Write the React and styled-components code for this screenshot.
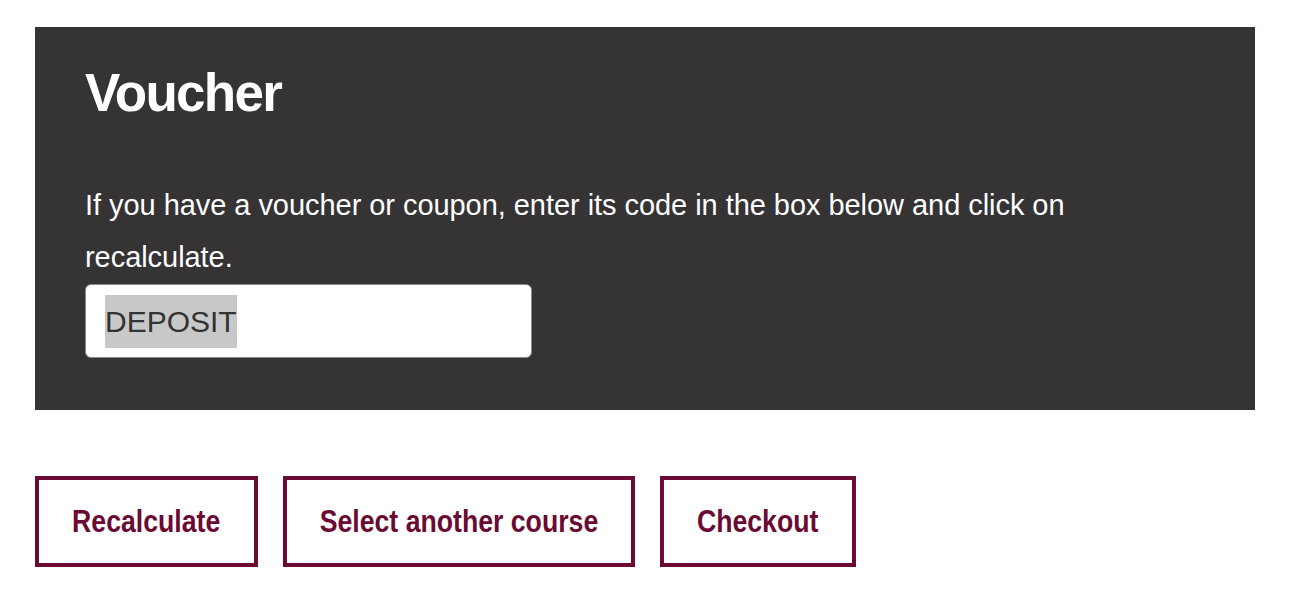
import React from "react";
import styled, { createGlobalStyle } from "styled-components";

const Global = createGlobalStyle`
  html, body { margin: 0; padding: 0; background: #ffffff; }
  body { font-family: "Liberation Sans", Arial, sans-serif; }
`;

const Page = styled.div`
  padding: 27px 36px 0 35px;
`;

const Panel = styled.section`
  background: #353334;
  height: 383px;
  box-sizing: border-box;
  padding: 39px 50px 0 50px;
  color: #ffffff;
`;

const Title = styled.h2`
  margin: 0;
  font-family: "Liberation Sans", Arial, sans-serif;
  font-weight: 700;
  font-size: 53px;
  line-height: 1;
  letter-spacing: -1.7px;
`;

const Text = styled.p`
  margin: 60px 0 0 0;
  max-width: 1010px;
  font-size: 29px;
  line-height: 52px;
  letter-spacing: -0.05px;
`;

const Field = styled.div`
  width: 447px;
  height: 74px;
  box-sizing: border-box;
  margin-top: 1px;
  background: #ffffff;
  border: 1px solid #8a8a8a;
  border-radius: 6px;
  display: flex;
  align-items: center;
  padding-left: 19px;
`;

const Selected = styled.span`
  display: inline-block;
  height: 53px;
  background: #c8c8c8;
  color: #333333;
  font-size: 30px;
  line-height: 53px;
`;

const Actions = styled.div`
  display: flex;
  gap: 25px;
  margin-top: 66px;
`;

const Button = styled.button`
  width: ${(p) => p.$w}px;
  height: 91px;
  box-sizing: border-box;
  border: 4px solid #6b0a33;
  background: #ffffff;
  color: #6b0a33;
  padding: 0;
  cursor: pointer;
  display: flex;
  align-items: center;
  justify-content: center;
`;

const Label = styled.span`
  display: inline-block;
  font-family: "Liberation Sans", Arial, sans-serif;
  font-weight: 700;
  font-size: 31px;
  white-space: nowrap;
  transform: scaleX(0.86);
`;

export default function App() {
  return (
    <>
      <Global />
      <Page>
        <Panel>
          <Title>Voucher</Title>
          <Text>
            If you have a voucher or coupon, enter its code in the box below and click on recalculate.
          </Text>
          <Field>
            <Selected>DEPOSIT</Selected>
          </Field>
        </Panel>
        <Actions>
          <Button $w={223}><Label>Recalculate</Label></Button>
          <Button $w={352}><Label>Select another course</Label></Button>
          <Button $w={196}><Label>Checkout</Label></Button>
        </Actions>
      </Page>
    </>
  );
}
